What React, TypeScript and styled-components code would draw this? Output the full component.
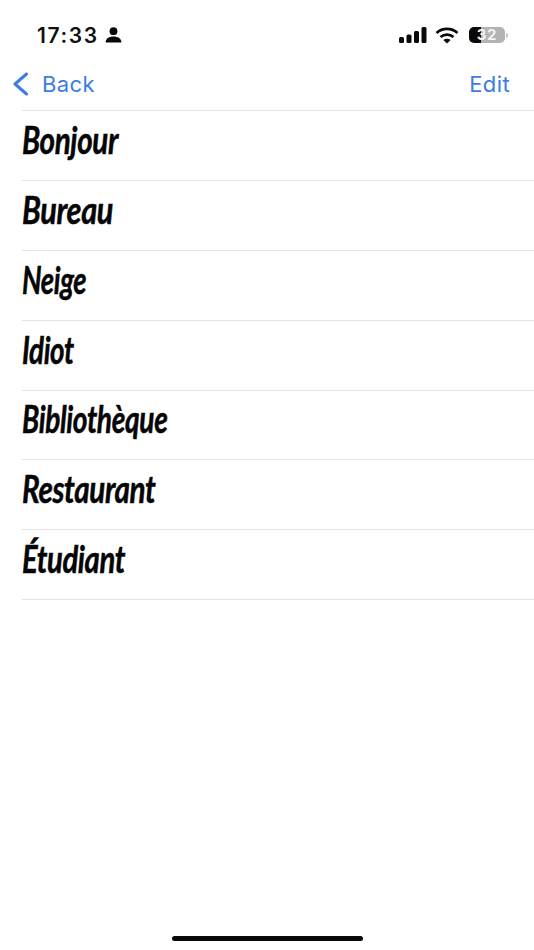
import React from 'react';
import styled, { createGlobalStyle } from 'styled-components';

const GlobalStyle = createGlobalStyle`
    html, body {
        margin: 0;
        padding: 0;
        background: #fff;
    }
`

const Screen = styled.div`
    width          : 534px;
    height         : 950px;
    display        : flex;
    flex-direction : column;
    overflow       : hidden;
    background     : #fff;
`

const StatusBar = styled.div`
    height         : 68px;
    flex-shrink    : 0;
    box-sizing     : border-box;
    padding        : 2px 26px 0 37px;
    display        : flex;
    justify-content: space-between;
    align-items    : center;
`

const StatusGroup = styled.div<{ $gap: number }>`
    display    : flex;
    align-items: center;
    gap        : ${p => p.$gap}px;
`

const Clock = styled.span`
    font-family   : "Inter", "Liberation Sans", sans-serif;
    font-size     : 21px;
    font-weight   : 600;
    letter-spacing: 1.6px;
    color         : #111;
`

const Battery = styled.div`
    width         : 36px;
    height        : 16px;
    margin-left   : 2px;
    border-radius : 5px;
    background    : linear-gradient(90deg, #0a0a0a 0 32%, #b3b3b3 32% 100%);
    font-family   : "Inter", "Liberation Sans", sans-serif;
    font-size     : 15px;
    font-weight   : 700;
    letter-spacing: 0.8px;
    line-height   : 16px;
    text-align    : center;
    color         : #f2f2f2;
`

const BatteryCap = styled.div`
    width        : 2px;
    height       : 5px;
    margin-left  : -7px;
    border-radius: 0 2px 2px 0;
    background   : #c4c4c4;
`

const NavBar = styled.div`
    height         : 42px;
    flex-shrink    : 0;
    box-sizing     : border-box;
    padding        : 0 24px 10px 12px;
    display        : flex;
    justify-content: space-between;
    align-items    : center;
    font-family    : "Inter", "Liberation Sans", sans-serif;
    font-size      : 22px;
    letter-spacing : 0.4px;
    color          : #3b7de0;
`

const BackLink = styled.div`
    display    : flex;
    align-items: center;
    gap        : 13px;
`

const List = styled.div`
    margin-left: 22px;
    border-top : 1px solid #e4e4e4;
`

const Row = styled.div`
    height        : 70px;
    box-sizing    : border-box;
    padding-bottom: 13px;
    margin-bottom : -0.15px;
    display       : flex;
    align-items   : center;
    border-bottom : 1px solid #e4e4e4;
`

const Word = styled.span<{ $stretch: number }>`
    font-family     : "Lato", "Liberation Sans", sans-serif;
    font-size       : 38px;
    font-style      : italic;
    font-weight     : 700;
    letter-spacing  : -0.5px;
    color           : #050505;
    display         : inline-block;
    transform-origin: left center;
    transform       : scaleX(${p => p.$stretch});
    -webkit-text-stroke: 0.5px #050505;
`

const HomeIndicator = styled.div`
    width        : 191px;
    height       : 5px;
    margin       : auto auto 9px;
    border-radius: 3px;
    background   : #0a0a0a;
`

const SignalIcon = () => (
    <svg width="28" height="16" viewBox="0 0 28 16" fill="#0a0a0a">
        <rect x="0" y="10" width="5" height="6" rx="1.5" />
        <rect x="7.5" y="7.5" width="5" height="8.5" rx="1.5" />
        <rect x="15" y="4" width="5" height="12" rx="1.5" />
        <rect x="22.5" y="0" width="5" height="16" rx="1.5" />
    </svg>
)

const WifiIcon = () => (
    <svg width="24" height="17" viewBox="0 0 24 17" fill="none" stroke="#0a0a0a" strokeWidth="2.7">
        <path d="M1.5 6C7.5 .6 16.5 .6 22.5 6" />
        <path d="M5.5 10C9.3 6.8 14.7 6.8 18.5 10" />
        <path d="M12 16.6l-3.6-3.7c2.2-1.6 5-1.6 7.2 0z" fill="#0a0a0a" stroke="none" />
    </svg>
)

const PersonIcon = () => (
    <svg width="17" height="16" viewBox="0 0 17 16" fill="#0a0a0a">
        <circle cx="8.5" cy="4.2" r="3.9" />
        <path d="M.6 15.4c0-4 3.4-6 7.9-6s7.9 2 7.9 6z" />
    </svg>
)

const ChevronIcon = () => (
    <svg width="17" height="24" viewBox="0 0 17 24" fill="none" stroke="#3b7de0" strokeWidth="3" strokeLinecap="round" strokeLinejoin="round">
        <path d="M14.5 2L3 12l11.5 10" />
    </svg>
)

const words = [
    { text: 'Bonjour', stretch: 0.78 },
    { text: 'Bureau', stretch: 0.81 },
    { text: 'Neige', stretch: 0.72 },
    { text: 'Idiot', stretch: 0.73 },
    { text: 'Bibliothèque', stretch: 0.74 },
    { text: 'Restaurant', stretch: 0.78 },
    { text: 'Étudiant', stretch: 0.77 },
];

const App = () => {
    return (
        <Screen>
            <GlobalStyle />
            <StatusBar>
                <StatusGroup $gap={6}>
                    <Clock>17:33</Clock>
                    <PersonIcon />
                </StatusGroup>
                <StatusGroup $gap={8}>
                    <SignalIcon />
                    <WifiIcon />
                    <Battery>32</Battery>
                    <BatteryCap />
                </StatusGroup>
            </StatusBar>
            <NavBar>
                <BackLink>
                    <ChevronIcon />
                    <span>Back</span>
                </BackLink>
                <span>Edit</span>
            </NavBar>
            <List>
                {words.map(w => (
                    <Row key={w.text}><Word $stretch={w.stretch}>{w.text}</Word></Row>
                ))}
            </List>
            <HomeIndicator />
        </Screen>
    )
}

export default App;
